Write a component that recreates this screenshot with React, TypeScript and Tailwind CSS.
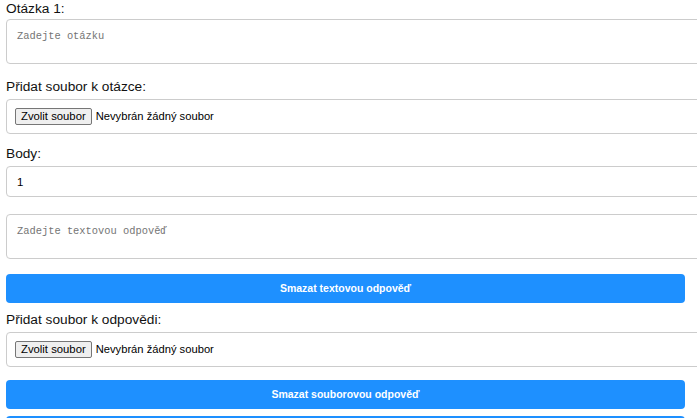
import React from "react";

function Label({ children, className = "" }: { children: React.ReactNode; className?: string }) {
  return (
    <div className={"h-[18px] leading-[18px] text-[13.7px] text-[#111111] " + className}>{children}</div>
  );
}

function FileBox({ className = "" }: { className?: string }) {
  return (
    <div
      className={
        "w-[701px] h-[35px] border border-[#cccccc] rounded-[4px] bg-white flex items-center pl-[8px] " + className
      }
    >
      <span className="h-[17px] px-[5px] flex items-center border border-[#767676] bg-[#efefef] rounded-[2px] text-[11.3px] text-black leading-none">
        Zvolit soubor
      </span>
      <span className="ml-[4px] text-[11.2px] text-black">Nevybrán žádný soubor</span>
    </div>
  );
}

function BlueButton({ children, className = "" }: { children?: React.ReactNode; className?: string }) {
  return (
    <button
      className={
        "w-[679px] h-[29px] rounded-[4px] bg-[#1e90ff] text-white font-bold text-[10.5px] flex items-center justify-center " +
        className
      }
    >
      {children}
    </button>
  );
}

export default function App() {
  return (
    <div
      className="w-[697px] h-[418px] overflow-hidden bg-white"
      style={{ fontFamily: '"Liberation Sans", Arial, sans-serif' }}
    >
      <div className="ml-[6px] w-[679px]">
        <Label>Otázka 1:</Label>
        <textarea
          readOnly
          placeholder="Zadejte otázku"
          className="block mt-[1px] w-[701px] h-[45px] border border-[#cccccc] rounded-[4px] p-[10px] text-[10.4px] leading-[12px] font-['Liberation_Mono',monospace] placeholder:text-[#757575] outline-none"
        />
        <Label className="mt-[14px]">Přidat soubor k otázce:</Label>
        <FileBox className="mt-[3px]" />
        <Label className="mt-[11px]">Body:</Label>
        <input
          readOnly
          type="text"
          value="1"
          className="block mt-[3px] w-[701px] h-[31px] border border-[#cccccc] rounded-[4px] px-[10px] text-[11.4px] text-black outline-none"
        />
        <textarea
          readOnly
          placeholder="Zadejte textovou odpověď"
          className="block mt-[17px] w-[701px] h-[45px] border border-[#cccccc] rounded-[4px] p-[10px] text-[10.4px] leading-[12px] font-['Liberation_Mono',monospace] placeholder:text-[#757575] outline-none"
        />
        <BlueButton className="mt-[15px]">Smazat textovou odpověď</BlueButton>
        <Label className="mt-[8px]">Přidat soubor k odpovědi:</Label>
        <FileBox className="mt-[3px]" />
        <BlueButton className="mt-[13px]">Smazat souborovou odpověď</BlueButton>
        <BlueButton className="mt-[7px]" />
      </div>
    </div>
  );
}
